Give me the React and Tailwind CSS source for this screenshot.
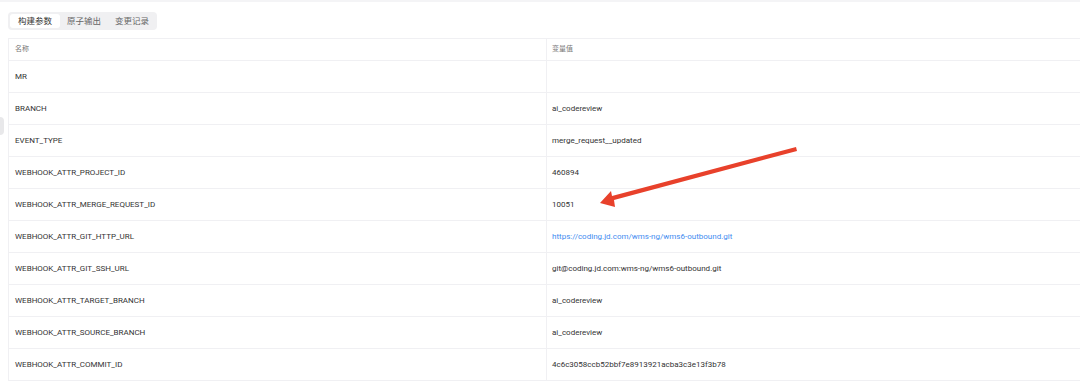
import React from "react";

const rows = [
  { name: "MR", value: "" },
  { name: "BRANCH", value: "ai_codereview" },
  { name: "EVENT_TYPE", value: "merge_request__updated" },
  { name: "WEBHOOK_ATTR_PROJECT_ID", value: "460894" },
  { name: "WEBHOOK_ATTR_MERGE_REQUEST_ID", value: "10051" },
  { name: "WEBHOOK_ATTR_GIT_HTTP_URL", value: "https://coding.jd.com/wms-ng/wms6-outbound.git", link: true },
  { name: "WEBHOOK_ATTR_GIT_SSH_URL", value: "git@coding.jd.com:wms-ng/wms6-outbound.git" },
  { name: "WEBHOOK_ATTR_TARGET_BRANCH", value: "ai_codereview" },
  { name: "WEBHOOK_ATTR_SOURCE_BRANCH", value: "ai_codereview" },
  { name: "WEBHOOK_ATTR_COMMIT_ID", value: "4c6c3058ccb52bbf7e8913921acba3c3e13f3b78" },
];

const tabs = ["构建参数", "原子输出", "变更记录"];

export default function App() {
  return (
    <div
      className="relative w-[1080px] h-[387px] overflow-hidden bg-white text-[#333]"
      style={{ fontFamily: "Roboto, 'Noto Sans CJK SC', sans-serif" }}
    >
      {/* top strip */}
      <div className="h-[2px] bg-[#f4f4f6]" />

      {/* side handle */}
      <div className="absolute left-0 top-[117px] w-[4px] h-[18px] bg-[#e8e8ea] rounded-r-sm" />

      <div className="pl-[8px] pt-[10px]">
        {/* tabs */}
        <div className="flex w-fit items-center h-[18px] pl-[2px] pr-[1px] rounded-[4px] bg-[#f0f0f2] leading-none">
          {tabs.map((t, i) => (
            <div
              key={t}
              className={
                i === 0
                  ? "h-[14px] px-[8px] flex items-center rounded-[3px] bg-white text-[8.5px] text-[#333]"
                  : "h-[14px] px-[7px] flex items-center text-[8.5px] text-[#666]"
              }
            >
              {t}
            </div>
          ))}
        </div>

        {/* table */}
        <div className="mt-[8px] border-l border-t border-[#f0f0f3] w-[1100px]">
          <div className="flex h-[22px] border-b border-[#f0f0f3] text-[7px] text-[#777]">
            <div className="w-[538px] flex items-center pl-[6px] border-r border-[#f0f0f3]">名称</div>
            <div className="flex-1 flex items-center pl-[5px]">变量值</div>
          </div>
          {rows.map((r) => (
            <div key={r.name} className="flex h-[32px] border-b border-[#f0f0f3] text-[8px]">
              <div className="w-[538px] flex items-center pl-[6px] border-r border-[#f0f0f3] text-[#333]">
                {r.name}
              </div>
              <div className={"flex-1 flex items-center pl-[5px] " + (r.link ? "text-[#3f8cf0]" : "text-[#333]")}>
                {r.value}
              </div>
            </div>
          ))}
        </div>
      </div>

      {/* annotation arrow */}
      <svg className="absolute left-0 top-0 pointer-events-none" width="1080" height="387">
        <path d="M796 147 L797 151 L614 200 L615 207 L600 203 L611 191 L612 196 Z" fill="#e8412b" />
      </svg>
    </div>
  );
}
